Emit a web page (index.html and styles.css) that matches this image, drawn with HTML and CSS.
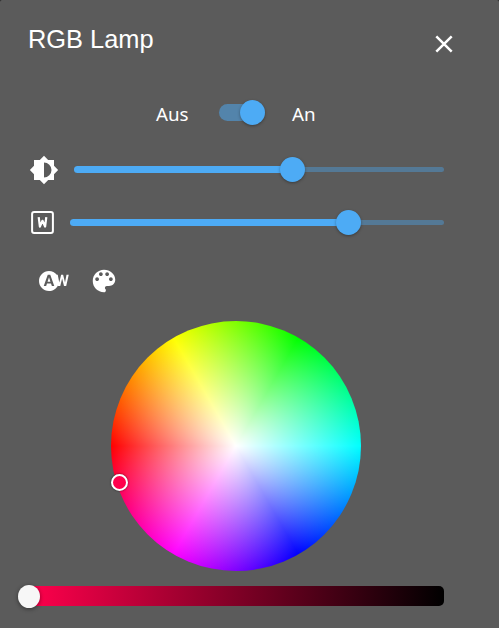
FILE: index.html
```html
<!DOCTYPE html>
<html lang="de">
<head>
<meta charset="utf-8">
<title>RGB Lamp</title>
<link rel="stylesheet" href="styles.css">
</head>
<body>
<main class="dialog">
  <header class="header">
    <h1 class="title">RGB Lamp</h1>
    <button class="close" aria-label="Schließen">
      <svg width="18" height="18" viewBox="0 0 18 18"><path d="M1.3 1.3 16.7 16.7M16.7 1.3 1.3 16.7" stroke="currentColor" stroke-width="2.5"/></svg>
    </button>
  </header>
  <div class="power">
    <span class="off">Aus</span>
    <div class="switch"><div class="knob"></div></div>
    <span>An</span>
  </div>
  <div class="row brightness">
    <svg class="icon" width="30" height="30" viewBox="0 0 24 24"><path d="M12 18V6a6 6 0 0 1 0 12M20 15.31 23.31 12 20 8.69V4h-4.69L12 .69 8.69 4H4v4.69L.69 12 4 15.31V20h4.69L12 23.31 15.31 20H20Z"/></svg>
    <div class="slider"><div class="fill"></div><div class="thumb"></div></div>
  </div>
  <div class="row white">
    <svg class="icon" width="23" height="23" viewBox="0 0 23 23"><rect x="1.1" y="1.1" width="20.8" height="20.8" rx="2" fill="none" stroke="currentColor" stroke-width="2"/><path d="M7.7 6.2 8.9 15.6 11.5 9.8 14.1 15.6 15.3 6.2" fill="none" stroke="currentColor" stroke-width="2.2" stroke-linejoin="round"/></svg>
    <div class="slider"><div class="fill"></div><div class="thumb"></div></div>
  </div>
  <div class="modes">
    <svg class="icon" width="30" height="30" viewBox="0 0 24 24"><path d="M6.85 12.65h2.3L8 9l-1.15 3.65zM22 7l-1.2 6.29L19.3 7h-1.6l-1.49 6.29L15 7h-.76C12.77 5.17 10.53 4 8 4c-4.42 0-8 3.58-8 8s3.58 8 8 8c3.13 0 5.84-1.81 7.15-4.43l.1.43H17l1.5-6.1L20 16h1.75l2.05-9H22zm-11.7 9l-.7-2H6.4l-.7 2H3.8L7 7h2l3.2 9h-1.9z"/></svg>
    <svg class="icon" width="30" height="30" viewBox="0 0 24 24"><path d="M12 3c-4.97 0-9 4.03-9 9s4.03 9 9 9c.83 0 1.5-.67 1.5-1.5 0-.39-.15-.74-.39-1.01-.23-.26-.38-.61-.38-.99 0-.83.67-1.5 1.5-1.5H16c2.76 0 5-2.24 5-5 0-4.42-4.03-8-9-8zm-5.5 9c-.83 0-1.5-.67-1.5-1.5S5.67 9 6.5 9 8 9.67 8 10.5 7.33 12 6.5 12zm3-4C8.67 8 8 7.33 8 6.5S8.67 5 9.5 5s1.5.67 1.5 1.5S10.33 8 9.5 8zm5 0c-.83 0-1.5-.67-1.5-1.5S13.67 5 14.5 5s1.5.67 1.5 1.5S15.33 8 14.5 8zm3 4c-.83 0-1.5-.67-1.5-1.5S16.67 9 17.5 9s1.5.67 1.5 1.5-.67 1.5-1.5 1.5z"/></svg>
  </div>
  <div class="wheel"><div class="marker"></div></div>
  <div class="shade"><div class="shade-thumb"></div></div>
</main>
</body>
</html>
```
FILE: styles.css
```css
* { box-sizing: border-box; }
body {
  margin: 0;
  background: #252525;
  color: #fff;
  overflow: hidden;
}
.dialog {
  height: 628px;
  padding: 24px 55px 0 29px;
  background: #5b5b5b;
  border-radius: 2px 2px 0 0;
}
.header {
  display: flex;
  justify-content: space-between;
  height: 76px;
  margin: 0 -9px 0 -1px;
}
.title {
  margin: 0;
  font: 400 25.4px/31px "Liberation Sans", sans-serif;
}
.close {
  width: 18px;
  height: 18px;
  margin-top: 11px;
  padding: 0;
  border: 0;
  background: none;
  color: inherit;
}
svg { display: block; flex: none; }
.icon { fill: currentColor; }
.power {
  display: flex;
  align-items: center;
  height: 25px;
  margin-left: 127px;
  font: 18.8px/25px "Noto Sans", sans-serif;
}
.power span { position: relative; top: 2px; }
.off { width: 63px; }
.switch {
  position: relative;
  width: 43px;
  height: 17px;
  margin-right: 30px;
  border-radius: 9px;
  background: #5384ab;
}
.knob, .thumb {
  position: absolute;
  width: 25px;
  height: 25px;
  border-radius: 50%;
  background: #4dabf5;
  box-shadow: 0 1px 3px rgba(0, 0, 0, .35);
}
.knob { top: -4px; left: 21px; }
.row { display: flex; align-items: center; height: 30px; }
.brightness { margin-top: 30px; gap: 15px; }
.white { margin: 23px 0 0 2px; gap: 16px; }
.slider {
  position: relative;
  flex: 1;
  height: 5px;
  margin-bottom: 1px;
  border-radius: 3px;
  background: #547996;
}
.fill {
  height: 7px;
  margin-top: -1px;
  border-radius: 4px;
  background: #4dabf5;
}
.thumb { top: -10px; }
.brightness .fill { width: 218px; }
.brightness .thumb { left: 205.5px; }
.white .icon { margin-bottom: 1px; }
.white .fill { width: 278px; }
.white .thumb { left: 265.5px; }
.modes { display: flex; gap: 20px; margin: 28px 0 0 10px; }
.wheel {
  position: relative;
  width: 250px;
  height: 250px;
  margin: 25px 0 0 82px;
  border-radius: 50%;
  background:
    radial-gradient(circle closest-side, #fff, rgba(255, 255, 255, 0)),
    conic-gradient(from 270deg, #f00, #ff0, #0f0, #0ff, #00f, #f0f, #f00);
}
.marker {
  position: absolute;
  left: -.5px;
  top: 152.5px;
  width: 17px;
  height: 17px;
  border: 2px solid #fff;
  border-radius: 50%;
  background: #ff004c;
  box-shadow: 0 0 2px rgba(0, 0, 0, .7);
}
.shade {
  position: relative;
  height: 20px;
  margin-top: 15px;
  border-radius: 5px;
  background: linear-gradient(90deg, #ff004c, #000);
}
.shade-thumb {
  position: absolute;
  left: -11.5px;
  top: -1.5px;
  width: 22.5px;
  height: 23.5px;
  border-radius: 50%;
  background: #f7f7f7;
  box-shadow: 0 1px 4px rgba(0, 0, 0, .45);
}
```
